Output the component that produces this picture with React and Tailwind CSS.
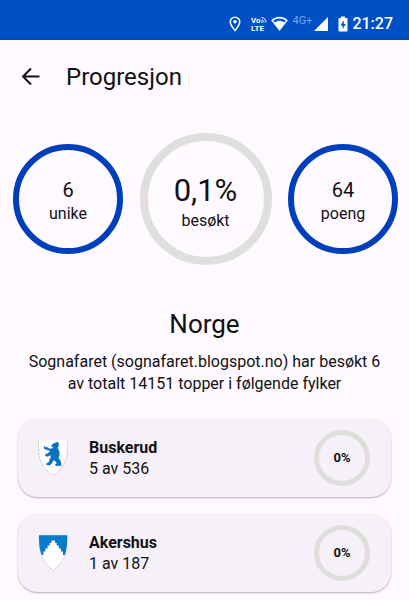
import React from 'react';

const counties = [
  { name: 'Buskerud', visited: 5, total: 536, percent: 0, Crest: BuskerudCrest },
  { name: 'Akershus', visited: 1, total: 187, percent: 0, Crest: AkershusCrest },
];

function BuskerudCrest() {
  return (
    <svg width="30" height="36" viewBox="0 0 30 36" aria-hidden="true">
      <path d="M.5 .3H29.7C29.7 11 31 25 15.2 35.4-1 25 .5 11 .5 .3Z" fill="#fff" />
      <path d="M.5 .3C.5 11-1 25 15.2 35.4 31 25 29.7 11 29.7 .3" fill="none" stroke="#b9b7bb" strokeWidth=".7" strokeDasharray="3 1" />
      <path
        d="M14 5 15.5 3.5 17.5 3 19 2 20.5 3V5.5L19.5 8 21 11 21.3 15 20.3 18 22.5 21 23.2 25.5 17.8 25.8 17.5 24.3 19 23.8 18 21.3 15 20 14 23 12 25H8.8L8.6 23.5 10.8 22.5 12 19 13 17 12.8 15 9.5 16.3 7.5 16 7.8 13.8 9 14.2 11 12.5 12.5 11 10 10 8 9.5 6.2 8.5 6.3 6 7.5 7.8 9 7 9.8 8.3 13 9 15.2 8 15 6.6 13.5 6.3Z"
        fill="#0a6fbd"
        stroke="#0a6fbd"
        strokeWidth=".5"
        strokeLinejoin="round"
      />
    </svg>
  );
}

function AkershusCrest() {
  return (
    <svg width="30" height="36" viewBox="0 0 30 36" aria-hidden="true">
      <path d="M1.3 .3H29C29 11 30 25 15.2 35.4 .5 25 1.3 11 1.3 .3Z" fill="#fff" stroke="#b9b7bb" strokeWidth=".5" />
      <path
        d="M1 .2H29.3C29.3 8 29 14 26.8 20H25V16.5H23V13.5H20.8V10.5H18.7V8H17V5.5H13.5V8H11.7V10.5H9.6V13.5H7.4V16.5H5.4V20H3.6C1.3 14 1 8 1 .2Z"
        fill="#0a7bc8"
      />
    </svg>
  );
}

const StatusBar = () => (
  <div className="h-10 bg-[#0050c5] border-b border-[#0747a8] flex items-center justify-end pr-4 pt-2 text-white">
    <svg className="mr-2.5" width="12" height="16" viewBox="0 0 12 16" aria-hidden="true">
      <path d="M6 1.2C3.3 1.2 1.3 3.2 1.3 5.8 1.3 9.2 6 14.5 6 14.5s4.7-5.3 4.7-8.7C10.7 3.2 8.7 1.2 6 1.2Z" fill="none" stroke="currentColor" strokeWidth="1.5" />
      <circle cx="6" cy="5.8" r="1.7" fill="currentColor" />
    </svg>
    <svg className="mr-1" width="16" height="16" viewBox="0 0 16 16" aria-hidden="true">
      <text x="0" y="7" fontSize="8" fontWeight="700" fill="currentColor" fontFamily="Roboto, sans-serif">Vo</text>
      <text x="0" y="15" fontSize="8" fontWeight="700" fill="currentColor" fontFamily="Roboto, sans-serif">LTE</text>
      <path d="M10.5 1.5C13 1.5 15 3.7 15 6.5M10.5 4C12 4 13 5 13 6.5" fill="none" stroke="currentColor" strokeWidth="1" />
      <circle cx="11" cy="6" r=".8" fill="currentColor" />
    </svg>
    <svg className="mr-1" width="17" height="16" viewBox="0 0 17 16" aria-hidden="true">
      <path d="M.2 4.2C5-0.5 12-.5 16.8 4.2L8.5 15Z" fill="currentColor" />
      <path d="M2.2 4.8C6 1.8 11 1.8 14.8 4.8L13.4 6.6C10.2 4.1 6.8 4.1 3.6 6.6Z" fill="#0050c5" />
    </svg>
    <span className="mr-0.5 pb-1.5 text-[11px] leading-4 text-[#76a5e6]">4G+</span>
    <svg className="mr-2.5" width="14" height="14" viewBox="0 0 14 14" aria-hidden="true">
      <path d="M14 0V14H0Z" fill="currentColor" />
    </svg>
    <svg className="mr-1" width="10" height="16" viewBox="0 0 10 16" aria-hidden="true">
      <path d="M3 .5H7V2H8.8Q9.5 2 9.5 2.8V14.7Q9.5 15.5 8.7 15.5H1.3Q.5 15.5 .5 14.7V2.8Q.5 2 1.2 2H3Z" fill="currentColor" />
      <path d="M5.8 4.2 2.5 9.4H4.6V13.2L7.7 8H5.8Z" fill="#0050c5" />
    </svg>
    <span className="text-base leading-5 font-medium">21:27</span>
  </div>
);

const StatRing = ({ value, label }) => (
  <div className="size-[110px] shrink-0 rounded-full border-6 border-[#003fbb] flex flex-col items-center justify-center pt-1.5">
    <span className="text-xl leading-6">{value}</span>
    <span className="text-base leading-6">{label}</span>
  </div>
);

const CountyCard = ({ name, visited, total, percent, Crest }) => (
  <li className="flex items-center rounded-[20px] bg-[#f6f1f8] pl-5 pr-[21px] py-[11px] shadow-[0_1px_2px_rgba(0,0,0,0.3)]">
    <Crest />
    <div className="ml-[21px] flex-1 text-base leading-[21px]">
      <h3 className="font-bold">{name}</h3>
      <p>{visited} av {total}</p>
    </div>
    <div className="size-14 rounded-full border-[5px] border-[#dededb] flex items-center justify-center text-[13px] font-bold">
      {percent}%
    </div>
  </li>
);

export default function App() {
  return (
    <div className="min-h-screen bg-[#fefaff] text-[#111113] font-[Roboto,sans-serif]">
      <StatusBar />

      <header className="flex items-center gap-6 px-5 pt-5">
        <button type="button" aria-label="Tilbake" className="size-[22px]">
          <svg width="22" height="22" viewBox="0 0 22 22" aria-hidden="true">
            <path d="M19.5 10.5H3M11 2.5l-8 8 8 8" fill="none" stroke="currentColor" strokeWidth="2" />
          </svg>
        </button>
        <h1 className="text-2xl leading-[34px]">Progresjon</h1>
      </header>

      <main>
        <section className="mt-[39px] flex items-center justify-between pl-[13px] pr-[11px]">
          <StatRing value="6" label="unike" />
          <div className="size-[132px] shrink-0 rounded-full border-8 border-[#dfdfdd] flex flex-col items-center justify-center pt-2">
            <span className="text-[31px] leading-9">0,1%</span>
            <span className="text-base leading-6">besøkt</span>
          </div>
          <StatRing value="64" label="poeng" />
        </section>

        <section className="mt-[43px] px-6 text-center">
          <h2 className="text-[26px] leading-8">Norge</h2>
          <p className="mt-[11px] text-base leading-[22px]">
            Sognafaret (sognafaret.blogspot.no) har besøkt 6 av totalt 14151 topper i følgende fylker
          </p>
        </section>

        <ul className="mt-6 flex flex-col gap-[17px] px-[18px] pb-2">
          {counties.map((county) => (
            <CountyCard key={county.name} {...county} />
          ))}
        </ul>
      </main>
    </div>
  );
}
